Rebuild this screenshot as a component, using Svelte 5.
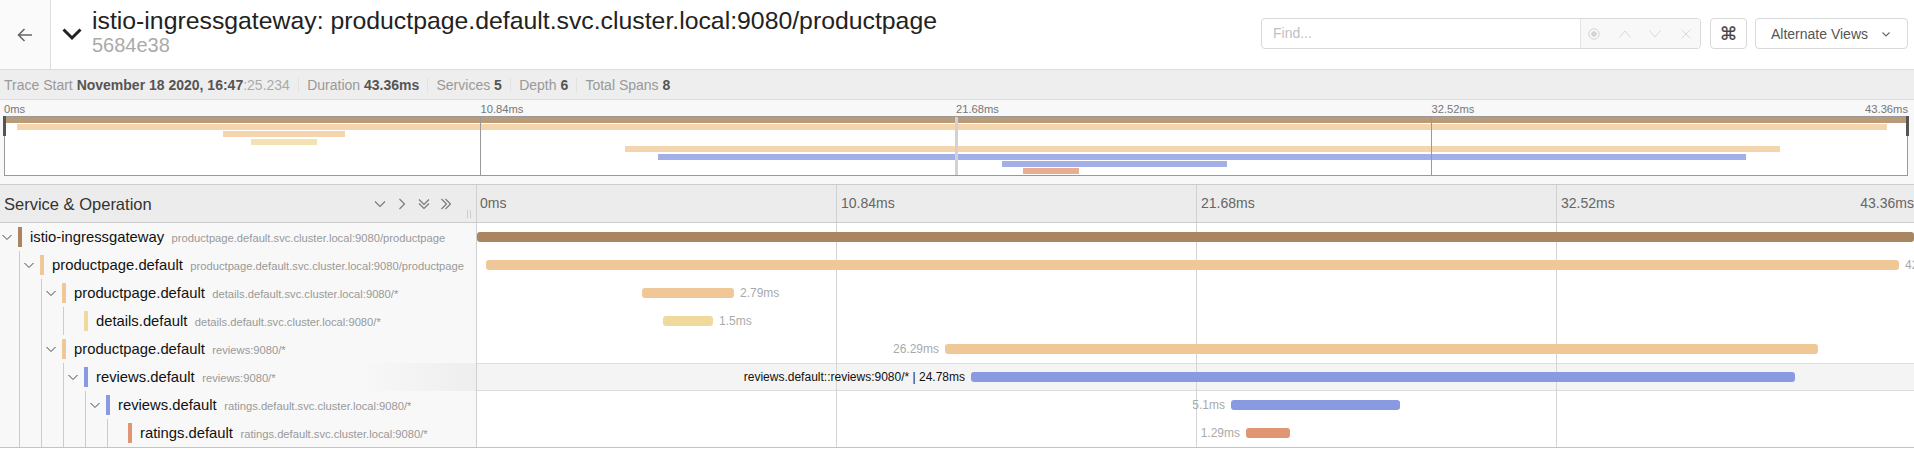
<script>
  const rows = [
    { depth: 0, kids: true, name: 'istio-ingressgateway', ep: 'productpage.default.svc.cluster.local:9080/productpage', color: '#a9865f', from: 477, to: 1914, mini: [5, 1907], mc: '#b99b79' },
    { depth: 1, kids: true, name: 'productpage.default', ep: 'productpage.default.svc.cluster.local:9080/productpage', color: '#f0c898', from: 486, to: 1899, label: '42.63ms', side: 'r', mini: [17, 1887], mc: '#f4d5ae' },
    { depth: 2, kids: true, name: 'productpage.default', ep: 'details.default.svc.cluster.local:9080/*', color: '#f0c898', from: 642, to: 734, label: '2.79ms', side: 'r', mini: [223, 345], mc: '#f4d5ae' },
    { depth: 3, kids: false, name: 'details.default', ep: 'details.default.svc.cluster.local:9080/*', color: '#efd99d', from: 663, to: 713, label: '1.5ms', side: 'r', mini: [251, 317], mc: '#f3e2b2' },
    { depth: 2, kids: true, name: 'productpage.default', ep: 'reviews:9080/*', color: '#f0c898', from: 945, to: 1818, label: '26.29ms', side: 'l', mini: [625, 1780], mc: '#f4d5ae' },
    { depth: 3, kids: true, name: 'reviews.default', ep: 'reviews:9080/*', color: '#8a9ae0', from: 971, to: 1795, label: 'reviews.default::reviews:9080/* | 24.78ms', side: 'l', hot: true, mini: [658, 1746], mc: '#a3afe7' },
    { depth: 4, kids: true, name: 'reviews.default', ep: 'ratings.default.svc.cluster.local:9080/*', color: '#8a9ae0', from: 1231, to: 1400, label: '5.1ms', side: 'l', mini: [1002, 1227], mc: '#a3afe7' },
    { depth: 5, kids: false, name: 'ratings.default', ep: 'ratings.default.svc.cluster.local:9080/*', color: '#e09672', from: 1246, to: 1290, label: '1.29ms', side: 'l', mini: [1023, 1079], mc: '#e7ae92' }
  ];
  const LEFT = 477;
  const WIDTH = 1437;
  const ticks = ['0ms', '10.84ms', '21.68ms', '32.52ms'];
  const miniTicks = [480, 956, 1431];
  const guides = (d) => Array.from({ length: d }, (_, i) => i);
</script>

<div class="page">
  <header class="top">
    <button class="back" aria-label="Back">
      <svg width="20" height="20" viewBox="0 0 20 20"><path d="M17 10H3.500M9.500 4l-6 6 6 6" fill="none" stroke="#666" stroke-width="1.600"/></svg>
    </button>
    <svg class="collapse" width="20" height="14" viewBox="0 0 20 14"><path d="M1.500 2.500l8.500 8.500 8.500-8.500" fill="none" stroke="#222" stroke-width="3"/></svg>
    <div class="titles">
      <h1>istio-ingressgateway: productpage.default.svc.cluster.local:9080/productpage</h1>
      <small>5684e38</small>
    </div>
    <div class="tools">
      <div class="find">
        <span class="ph">Find...</span>
        <div class="findbtns">
          <svg width="14" height="14" viewBox="0 0 14 14"><circle cx="7" cy="7" r="5.200" fill="none" stroke="#d4d4d4"/><circle cx="7" cy="7" r="2.800" fill="#d4d4d4"/></svg>
          <svg width="14" height="14" viewBox="0 0 14 14"><path d="M1.500 10.500L7 4l5.500 6.500" fill="none" stroke="#d8d8d8"/></svg>
          <svg width="14" height="14" viewBox="0 0 14 14"><path d="M1.500 3.500L7 10l5.500-6.500" fill="none" stroke="#d8d8d8"/></svg>
          <svg width="14" height="14" viewBox="0 0 14 14"><path d="M2.500 2.500l9 9M11.500 2.500l-9 9" fill="none" stroke="#d8d8d8"/></svg>
        </div>
      </div>
      <button class="cmd">⌘</button>
      <button class="alt">
        <span>Alternate Views</span>
        <svg width="10" height="10" viewBox="0 0 10 10"><path d="M1.500 3.500L5 7l3.500-3.500" fill="none" stroke="#666" stroke-width="1.100"/></svg>
      </button>
    </div>
  </header>

  <div class="stats">
    <span class="stat">Trace Start <b>November 18 2020, 16:47</b><span class="ms">:25.234</span></span>
    <span class="stat">Duration <b>43.36ms</b></span>
    <span class="stat">Services <b>5</b></span>
    <span class="stat">Depth <b>6</b></span>
    <span class="stat last">Total Spans <b>8</b></span>
  </div>

  <section class="mini">
    <div class="miniruler">
      <span class="mt">0ms</span><span class="mt">10.84ms</span><span class="mt">21.68ms</span><span class="mt">32.52ms</span><span class="mtlast">43.36ms</span>
    </div>
    <div class="canvas">
      {#each rows as r, i}
        <i class="minibar" style="left:{r.mini[0] - 5}px;width:{r.mini[1] - r.mini[0]}px;top:{i * 7.4 - 0.5}px;background:{r.mc}"></i>
      {/each}
      {#each miniTicks as t, i}
        <i class="minitick" class:wide={i === 1} style="left:{t - 5}px"></i>
      {/each}
      <i class="handle lefth"></i>
      <i class="handle righth"></i>
    </div>
  </section>

  <section class="trace">
    <div class="thead">
      <div class="svc">
        <span>Service &amp; Operation</span>
        <div class="ctl">
          <svg width="14" height="14" viewBox="0 0 14 14"><path d="M2 4.500l5 5 5-5"/></svg>
          <svg width="14" height="14" viewBox="0 0 14 14"><path d="M4.500 2l5 5-5 5"/></svg>
          <svg width="14" height="14" viewBox="0 0 14 14"><path d="M2 2.500l5 5 5-5M2 6.500l5 5 5-5"/></svg>
          <svg width="14" height="14" viewBox="0 0 14 14"><path d="M2.500 2l5 5-5 5M6.500 2l5 5-5 5"/></svg>
        </div>
        <i class="grip"></i>
      </div>
      <div class="ruler">
        {#each ticks as t}<span class="tk">{t}</span>{/each}
        <span class="tklast">43.36ms</span>
      </div>
    </div>

    {#each rows as r}
      <div class="row" class:hot={r.hot}>
        <div class="lhs">
          {#each guides(r.depth) as g}<span class="guide"></span>{/each}
          <span class="arrow">
            {#if r.kids}
              <svg width="12" height="12" viewBox="0 0 12 12"><path d="M1.500 4l4.500 4.500L10.500 4" fill="none" stroke="#444" stroke-width="1"/></svg>
            {/if}
          </span>
          <span class="strip" style="background:{r.color}"></span>
          <span class="name">{r.name}</span>
          <span class="ep">{r.ep}</span>
        </div>
        <div class="rhs">
          <span class="vline"></span><span class="vline"></span><span class="vline"></span>
          <span class="bar" style="left:{r.from - LEFT}px;width:{r.to - r.from}px;background:{r.color}"></span>
          {#if r.label}
            {#if r.side === 'r'}
              <span class="dur" style="left:{r.to - LEFT + 6}px">{r.label}</span>
            {:else}
              <span class="dur" class:dark={r.hot} style="right:{WIDTH - (r.from - LEFT) + 6}px">{r.label}</span>
            {/if}
          {/if}
        </div>
      </div>
    {/each}
  </section>
</div>

<style>
  :global(body) { margin: 0; background: #fff; }
  .page {
    font-family: "Liberation Sans", Arial, sans-serif;
    width: 1914px;
    height: 468px;
    overflow: hidden;
    color: #222;
  }
  button { font: inherit; padding: 0; background: #fff; cursor: pointer; }

  .top { display: flex; align-items: center; height: 69px; border-bottom: 1px solid #ddd; }
  .back {
    width: 51px; height: 69px; border: 0; border-right: 1px solid #ddd; background: #fafafa;
    display: flex; align-items: center; justify-content: center; flex: none;
  }
  .collapse { margin-left: 11px; flex: none; margin-top: -1px; }
  .titles { margin-left: 10px; display: flex; flex-direction: column; flex: none; margin-top: -8px; }
  h1 { margin: 0; font-size: 24.800px; font-weight: 400; line-height: 29px; color: #222; }
  small { font-size: 20px; line-height: 20px; color: #aaa; }
  .tools { margin-left: auto; margin-right: 6px; display: flex; align-items: center; gap: 9px; margin-top: -2px; }
  .find {
    width: 440px; height: 31px; box-sizing: border-box; border: 1px solid #d9d9d9; border-radius: 4px;
    display: flex; align-items: stretch;
  }
  .ph { flex: 1; font-size: 14px; color: #bfbfbf; line-height: 29px; padding-left: 11px; }
  .findbtns {
    width: 120px; border-left: 1px solid #e4e4e4; background: #f8f8f8; border-radius: 0 3px 3px 0;
    display: flex; align-items: center; gap: 16.500px; padding-left: 6px; box-sizing: border-box;
  }
  .cmd {
    width: 37px; height: 31px; border: 1px solid #d9d9d9; border-radius: 4px; box-sizing: border-box;
    font-family: "DejaVu Sans", sans-serif; font-size: 18px; line-height: 1; color: #444; -webkit-text-stroke: .2px #444;
  }
  .alt {
    width: 153px; height: 31px; border: 1px solid #d9d9d9; border-radius: 4px; box-sizing: border-box; margin-left: -1px;
    display: flex; align-items: center; font-size: 14px; color: #555; padding-left: 15px; gap: 13px;
  }

  .stats {
    box-sizing: border-box; background: #eee; border-bottom: 1px solid #ddd;
    display: flex; align-items: center; font-size: 14px; color: #999; padding-left: 4px;
    height: 30px;
  }
  .stat { padding-right: 8px; margin-right: 8.250px; border-right: 1px solid #e2e2e2; line-height: 14px; white-space: pre; }
  .stat.last { border: 0; }
  .stat b { color: #555; }
  .ms { color: #aaa; }

  .mini { height: 84px; background: #f8f8f8; padding: 0 6px 0 4px; box-sizing: border-box; }
  .miniruler {
    height: 16px; display: flex; position: relative; align-items: center;
    font-size: 11.200px; color: #777; padding-top: 1px; box-sizing: border-box;
  }
  .mt { width: 475.500px; flex: none; box-sizing: border-box; }
  .mt:nth-child(n+2) { padding-left: 1px; }
  .mtlast { position: absolute; right: 0; }
  .canvas {
    position: relative; height: 60px; box-sizing: border-box; background: #fff;
    border: 1px solid #999;
  }
  .minibar { position: absolute; height: 6px; display: block; }
  .minitick { position: absolute; top: 0; bottom: 0; width: 1px; background: #999; }
  .minitick.wide { width: 3px; background: #d2d2d2; margin-left: -1px; }
  .handle { position: absolute; top: -1px; width: 3px; height: 20px; background: #555; }
  .lefth { left: -2px; }
  .righth { right: -2px; }

  .thead { display: flex; height: 39px; box-sizing: border-box; background: #ececec; border-top: 1px solid #ccc; border-bottom: 1px solid #ccc; }
  .svc {
    position: relative; width: 477px; box-sizing: border-box; border-right: 1px solid #d0d0d0;
    display: flex; align-items: center; padding: 1px 0 0 4px; font-size: 16.500px; color: #333; flex: none;
  }
  .ctl { position: absolute; left: 373px; top: 12px; display: flex; gap: 8px; }
  .ctl svg path { fill: none; stroke: #777; stroke-width: 1.100; }
  .grip { position: absolute; left: 467px; top: 25px; width: 2px; height: 8px; border-left: 1px solid #ccc; border-right: 1px solid #ccc; }
  .ruler { position: relative; flex: 1; display: flex; align-items: center; font-size: 14px; color: #666; }
  .tk { width: 360px; box-sizing: border-box; padding-left: 4px; height: 100%; line-height: 37px; border-left: 1px solid #d0d0d0; }
  .tk:first-child { border-left: 0; padding-left: 3px; width: 359px; }
  .tklast { position: absolute; right: 2px; line-height: 37px; }

  .row { display: flex; height: 28px; position: relative; }
  .lhs {
    width: 477px; flex: none; box-sizing: border-box; background: #f8f8f8; border-right: 1px solid #d0d0d0;
    display: flex; align-items: center; white-space: nowrap; overflow: hidden;
  }
  .guide { width: 22px; height: 28px; flex: none; box-sizing: border-box; background: linear-gradient(#ccc, #ccc) 19px 0 / 1px 100% no-repeat; }
  .arrow { width: 18px; flex: none; height: 12px; padding-left: 1px; box-sizing: border-box; }
  .arrow svg { display: block; }
  .strip { width: 4px; height: 20px; flex: none; margin-right: 8px; }
  .name { font-size: 14.800px; color: #111; margin-right: 7.500px; margin-top: -1px; }
  .ep { font-size: 11.200px; color: #999; margin-top: 1px; }
  .hot .lhs { background: linear-gradient(90deg, #f8f8f8 0 360px, #eee 100%); }
  .rhs { position: relative; flex: 1; overflow: hidden; background: #fff; display: flex; }
  .hot .rhs { background: #f4f4f4; box-shadow: inset 0 1px #ddd, inset 0 -1px #ddd; }
  .hot { z-index: 1; }
  .vline { position: relative; left: 359px; width: 360px; box-sizing: border-box; border-left: 1px solid #d5d5d5; height: 100%; flex: none; }
  .bar { position: absolute; top: 9px; height: 10px; border-radius: 3px; }
  .dur { position: absolute; top: 0; line-height: 28px; font-size: 12px; color: #aaa; white-space: nowrap; }
  .dur.dark { color: #111; }
  .trace { border-bottom: 1px solid #c4c4c4; }
</style>
